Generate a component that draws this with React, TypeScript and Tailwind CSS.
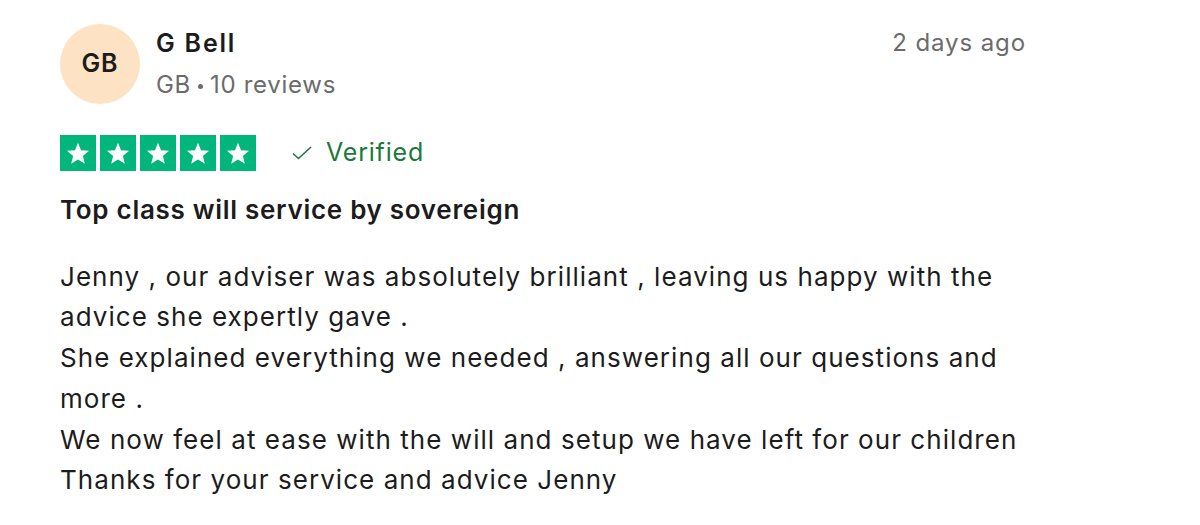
const Star = () => (
    <div className="w-9 h-9 bg-[#00b67a] flex items-center justify-center">
        <svg viewBox="0 0 24 24" className="w-[26px] h-[26px]" fill="#fff">
            <path d="M12 2.5l2.8 6.9 7.4.5-5.7 4.8 1.8 7.2L12 18l-6.3 3.9 1.8-7.2-5.7-4.8 7.4-.5z" />
        </svg>
    </div>
);

export default function App() {
    const body = `Jenny , our adviser was absolutely brilliant , leaving us happy with the advice she expertly gave .
She explained everything we needed , answering all our questions and more .
We now feel at ease with the will and setup we have left for our children
Thanks for your service and advice Jenny`;

    return (
        <div className="w-[1200px] h-[525px] bg-white text-[#1c1c1c] font-['Inter',sans-serif] pl-[60px] pt-6">
            <div className="flex w-[966px]">
                <div className="w-20 h-20 rounded-full bg-[#fde3c4] flex items-center justify-center text-[25px] font-semibold text-[#1c1c1c] tracking-[1px]">
                    GB
                </div>
                <div className="ml-4 flex-1">
                    <div className="flex justify-between items-start">
                        <div className="text-[25px] font-semibold leading-[36px] mt-[1px] tracking-[1.8px]">G Bell</div>
                        <div className="text-[24px] text-[#6b6b6b] leading-[36px] mt-[1px] tracking-[0.9px]">2 days ago</div>
                    </div>
                    <div className="text-[24px] text-[#6b6b6b] leading-[36px] mt-[6px] tracking-[0.7px] flex items-center">
                        GB<span className="inline-block w-[5px] h-[5px] rounded-full bg-[#6b6b6b] mx-[7px] mt-[3px]"></span>10 reviews
                    </div>
                </div>
            </div>
            <div className="flex items-center mt-[30px]">
                <div className="flex gap-1">
                    <Star /><Star /><Star /><Star /><Star />
                </div>
                <div className="flex items-center ml-[34px] text-[#1a7a3a] text-[25px] tracking-[0.8px]">
                    <svg viewBox="0 0 24 24" className="w-[24px] h-[24px] mr-[12px]" fill="none" stroke="#1a7a3a" strokeWidth="1.6">
                        <path d="M3 12.5l5.5 5L21 6" />
                    </svg>
                    Verified
                </div>
            </div>
            <div className="text-[26px] font-semibold mt-[20px] leading-[36px] tracking-[0.7px]">Top class will service by sovereign</div>
            <p className="text-[26px] leading-[40.8px] mt-[29px] w-[970px] whitespace-pre-line text-[#1c1c1c] tracking-[1.05px]">{body}</p>
        </div>
    );
}
